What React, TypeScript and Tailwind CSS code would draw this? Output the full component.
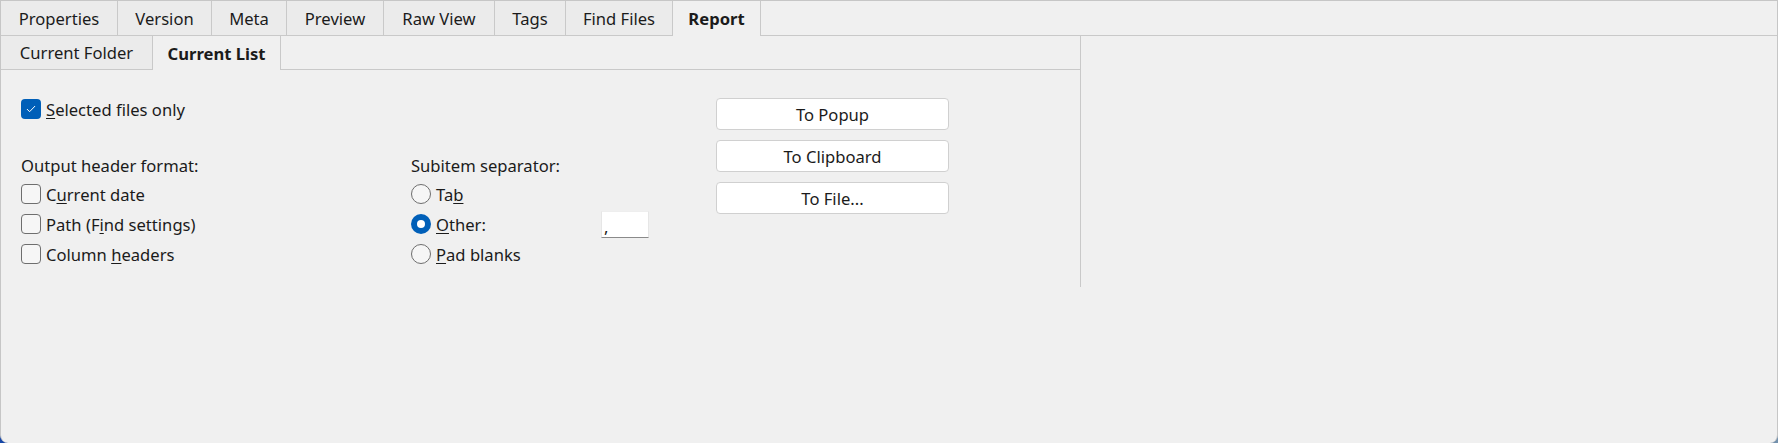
const topTabs = [
  { label: "Properties", w: "w-[117px]" },
  { label: "Version", w: "w-[94px]" },
  { label: "Meta", w: "w-[75px]" },
  { label: "Preview", w: "w-[97px]" },
  { label: "Raw View", w: "w-[111px]" },
  { label: "Tags", w: "w-[71px]" },
  { label: "Find Files", w: "w-[107px]" },
];

function CheckBox({ checked }: { checked?: boolean }) {
  if (checked) {
    return (
      <span className="flex h-[20px] w-[20px] shrink-0 items-center justify-center rounded-[4px] bg-[#005fb8]">
        <svg width="12" height="12" viewBox="0 0 12 12" fill="none">
          <path d="M2.2 6.3l2.4 2.4 5.2-5.4" stroke="#ffffff" strokeWidth="1" strokeLinecap="round" strokeLinejoin="round" />
        </svg>
      </span>
    );
  }
  return <span className="h-[20px] w-[20px] shrink-0 rounded-[4px] border border-[#6e6e6e] bg-[#f6f6f6]" />;
}

function Radio({ checked }: { checked?: boolean }) {
  if (checked) {
    return (
      <span className="flex h-[20px] w-[20px] shrink-0 items-center justify-center rounded-full bg-[#005fb8]">
        <span className="h-[8px] w-[8px] rounded-full bg-white" />
      </span>
    );
  }
  return <span className="h-[20px] w-[20px] shrink-0 rounded-full border border-[#6e6e6e] bg-[#f6f6f6]" />;
}

function Row({ children }: { children: React.ReactNode }) {
  return <div className="flex h-[30px] items-center gap-[5px]">{children}</div>;
}

export default function App() {
  return (
    <div
      className="h-[443px] w-[1778px] bg-gradient-to-r from-[#1747a6] to-[#7391ad] text-[16.6px] text-[#1b1b1b]"
      style={{ fontFamily: '"Noto Sans", "Open Sans", sans-serif' }}
    >
      <div className="flex h-full w-full flex-col overflow-hidden rounded-b-[8px] border-x border-t border-[#c6c6c6] bg-[#f0f0f0]">
        {/* Top tab strip */}
        <div className="flex h-[35px] shrink-0 border-b border-[#c9c9c9]">
          {topTabs.map((t) => (
            <div
              key={t.label}
              className={`${t.w} flex items-center justify-center border-r border-[#c9c9c9] bg-[#ebebeb] pt-[2px]`}
            >
              {t.label}
            </div>
          ))}
          <div className="relative -mb-px flex w-[88px] items-center justify-center border-r border-[#c9c9c9] bg-[#f0f0f0] pt-[2px] font-bold">
            Report
          </div>
        </div>

        <div className="flex">
          {/* Left page */}
          <div className="h-[251px] w-[1080px] shrink-0 border-r border-[#c9c9c9]">
            {/* Sub tab strip */}
            <div className="flex h-[34px] border-b border-[#c9c9c9]">
              <div className="flex w-[152px] items-center justify-center border-r border-[#c9c9c9] bg-[#ebebeb] pt-[2px]">
                Current Folder
              </div>
              <div className="relative -mb-px flex w-[128px] items-center justify-center border-r border-[#c9c9c9] bg-[#f0f0f0] pt-[2px] font-bold">
                Current List
              </div>
            </div>

            <div className="flex pl-[20px] pt-[25px]">
              <div className="w-[695px]">
                <div className="flex h-[28px] items-center gap-[5px]">
                  <CheckBox checked />
                  <span className="pt-[2px]">
                    <u className="underline-offset-2">S</u>elected files only
                  </span>
                </div>

                <div className="mt-[28px] grid grid-cols-[390px_1fr]">
                  <div>
                    <div className="flex h-[28px] items-center pt-[2px]">Output header format:</div>
                    <Row>
                      <CheckBox />
                      <span className="pt-[2px]">
                        C<u className="underline-offset-2">u</u>rrent date
                      </span>
                    </Row>
                    <Row>
                      <CheckBox />
                      <span className="pt-[2px]">
                        Path (F<u className="underline-offset-2">i</u>nd settings)
                      </span>
                    </Row>
                    <Row>
                      <CheckBox />
                      <span className="pt-[2px]">
                        Column <u className="underline-offset-2">h</u>eaders
                      </span>
                    </Row>
                  </div>

                  <div>
                    <div className="flex h-[28px] items-center pt-[2px]">Subitem separator:</div>
                    <Row>
                      <Radio />
                      <span className="pt-[2px]">
                        Ta<u className="underline-offset-2">b</u>
                      </span>
                    </Row>
                    <Row>
                      <Radio checked />
                      <span className="w-[160px] pt-[2px]">
                        <u className="underline-offset-2">O</u>ther:
                      </span>
                      <div className="flex h-[27px] w-[48px] items-end border border-b-[#8a8a8a] border-x-[#e6e6e6] border-t-[#eeeeee] bg-white pb-[1px] pl-[2px] leading-none">
                        ,
                      </div>
                    </Row>
                    <Row>
                      <Radio />
                      <span className="pt-[2px]">
                        <u className="underline-offset-2">P</u>ad blanks
                      </span>
                    </Row>
                  </div>
                </div>
              </div>

              {/* Output buttons */}
              <div className="mt-[3px] flex flex-col gap-[10px]">
                {["To Popup", "To Clipboard", "To File..."].map((b) => (
                  <button
                    key={b}
                    className="h-[32px] w-[233px] rounded-[4px] border border-[#d0d0d0] bg-white pt-[2px] text-[#1b1b1b]"
                  >
                    {b}
                  </button>
                ))}
              </div>
            </div>
          </div>

          {/* Right empty pane */}
          <div className="flex-1" />
        </div>
      </div>
    </div>
  );
}
